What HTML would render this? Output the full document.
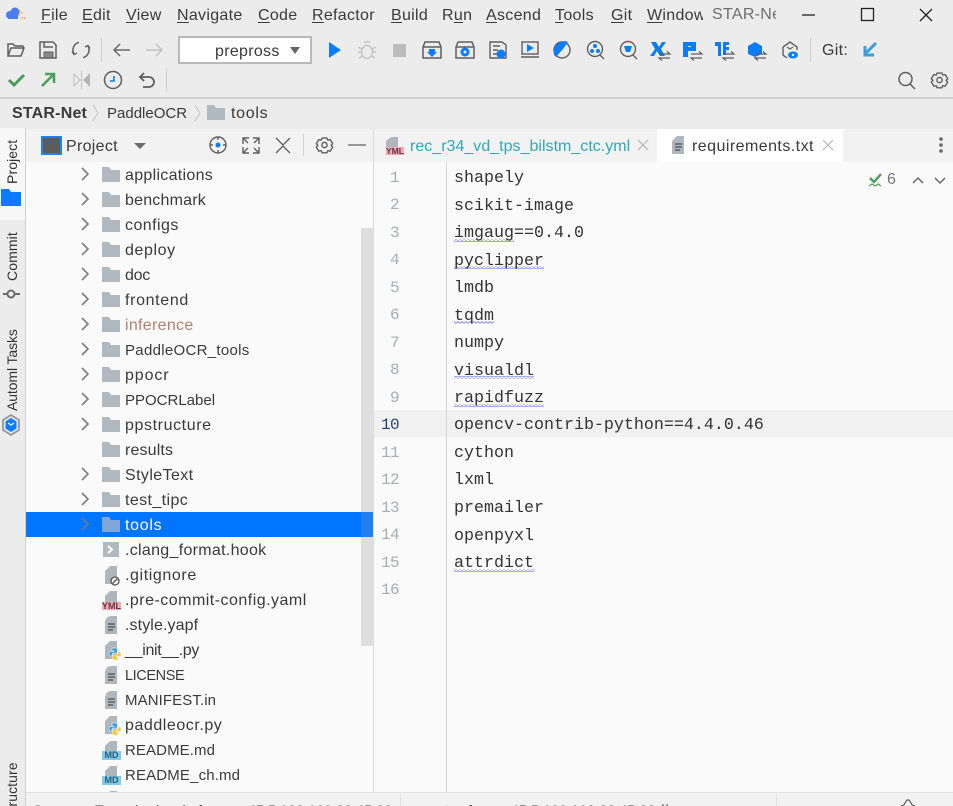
<!DOCTYPE html>
<html><head><meta charset="utf-8"><style>
*{box-sizing:border-box}
html{margin:0;padding:0;width:953px;height:806px;overflow:hidden}
body{margin:0;padding:0;width:953px;height:806px;overflow:hidden;background:#ececec;position:relative;font-family:"Liberation Sans",sans-serif;font-size:16px;letter-spacing:.3px;color:#3a3a3a}
#clip{position:absolute;left:0;top:0;width:953px;height:806px;overflow:hidden;contain:paint}
.a{position:absolute;white-space:pre;line-height:20px}
u{text-decoration-thickness:1px;text-underline-offset:2px}
.t{position:absolute;left:125px;white-space:pre;line-height:20px}
.m{position:absolute;left:454px;font-family:"Liberation Mono",monospace;font-size:16.67px;letter-spacing:0;line-height:20px;color:#333;white-space:pre}
.n{position:absolute;width:30px;left:369px;text-align:right;font-family:"Liberation Mono",monospace;font-size:16px;letter-spacing:-.6px;line-height:20px;color:#aaaeb1}
.v{position:absolute;transform-origin:0 0;transform:rotate(-90deg);white-space:pre;font-size:14px;letter-spacing:.1px;line-height:16px;color:#333}
.s{position:absolute;top:800px;font-size:14px;letter-spacing:.2px;line-height:20px;color:#333;white-space:pre}
svg{position:absolute;left:0;top:0}
</style></head><body><div id="clip">

<div class="a" style="left:0;top:97px;width:953px;height:2px;background:#d2d2d2"></div>
<div class="a" style="left:0;top:128px;width:26px;height:678px;background:#ececec;border-right:1px solid #d0d0d0"></div>
<div class="a" style="left:0;top:128px;width:25px;height:92px;background:#f7f7f7"></div>
<div class="a" style="left:26px;top:129px;width:347px;height:33px;background:#f2f2f2"></div>
<div class="a" style="left:26px;top:162px;width:347px;height:630px;background:#fafafa"></div>
<div class="a" style="left:361px;top:228px;width:12px;height:418px;background:#dedede"></div>
<div class="a" style="left:26px;top:512px;width:347px;height:25px;background:#0075ff"></div>
<div class="a" style="left:361px;top:512px;width:12px;height:25px;background:#1f80ee"></div>
<div class="a" style="left:373px;top:129px;width:1px;height:663px;background:#dcdcdc"></div>
<div class="a" style="left:374px;top:129px;width:579px;height:33px;background:#f2f2f2"></div>
<div class="a" style="left:657px;top:129px;width:186px;height:33px;background:#fff"></div>
<div class="a" style="left:374px;top:162px;width:579px;height:630px;background:#fafafa"></div>
<div class="a" style="left:374px;top:410px;width:579px;height:27px;background:#f1f1f1"></div>
<div class="a" style="left:446px;top:162px;width:1px;height:630px;background:#d6d6d6"></div>
<div class="a" style="left:26px;top:792px;width:927px;height:14px;background:#f2f2f2;border-top:1px solid #e4e4e4"></div>
<div class="a" style="left:178px;top:36px;width:134px;height:28px;background:#fff;border:2px solid #b9b9b9"></div>

<svg width="953" height="806" viewBox="0 0 953 806" fill="none">
<defs>
<pattern id="sq" width="4" height="3" patternUnits="userSpaceOnUse"><path d="M0 2.400 L2 .6 L4 2.400" stroke="#7f84ea" stroke-width=".9"/></pattern>
<g id="fo"><path d="M0 0h7l2 3h9v12H0z" fill="#b0b9c0"/></g>
<path id="ch" d="M-3-6l6 6-6 6" stroke="#7c7c7c" stroke-width="1.600"/>
<g id="doc"><path d="M5-9h7v18H0v-13z" fill="#aeb7bd"/><path d="M0-5.500l4-3.500v3.500z" fill="#aeb7bd"/><path d="M3-1h7M3 2h7M3 5h5" stroke="#4a4f52" stroke-width="1.200"/></g>
<g id="py"><path d="M5-9h7v18H0v-13z" fill="#aeb7bd"/>
<g transform="translate(4 -2)"><path d="M3 0h4a1.500 1.500 0 0 1 1.500 1.500V5H4.500A1.500 1.500 0 0 0 3 6.500V8H1.500A1.500 1.500 0 0 1 0 6.500V5a1.500 1.500 0 0 1 1.500-1.500H5V3H3z" fill="#3f9fd6" stroke="#fafafa" stroke-width=".5"/><path d="M9 12H5a1.500 1.500 0 0 1-1.500-1.500V7H7.500A1.500 1.500 0 0 0 9 5.500V4h1.500A1.500 1.500 0 0 1 12 5.500V7a1.500 1.500 0 0 1-1.500 1.500H7V9h2z" fill="#f6c83d" stroke="#fafafa" stroke-width=".5"/></g></g>
<g id="gear" stroke="#5f5f5f" stroke-width="1.700"><path d="M-3-8.500h6l1 2.500 3-.5 3 5-2 2 2 2-3 5-3-.5-1 2.500h-6l-1-2.500-3 .5-3-5 2-2-2-2 3-5 3 .5z" stroke-linejoin="round"/><circle r="3.200"/></g>
<g id="sw" stroke="#5e5e5e" stroke-width="1.200"><path d="M0 2h11l-3-2.500M11 6H0l3 2.500"/></g>
</defs>

<!-- logo -->
<circle cx="10" cy="15" r="4" fill="#4d7cf0"/><circle cx="15" cy="12" r="4.500" fill="#4d7cf0"/><rect x="8" y="13" width="10" height="6" fill="#4d7cf0"/>
<g fill="#f3a23c"><circle cx="20" cy="11" r=".9"/><circle cx="22" cy="13" r=".9"/><circle cx="19" cy="15" r=".9"/><circle cx="22" cy="18" r=".9"/><circle cx="25" cy="18" r=".9"/></g>
<!-- window -->
<path d="M802 15h13" stroke="#222" stroke-width="1.300"/>
<rect x="861.500" y="8.500" width="12" height="12" stroke="#222" stroke-width="1.300"/>
<path d="M920 9l12 12M932 9l-12 12" stroke="#222" stroke-width="1.300"/>

<!-- row 2 left -->
<path d="M8 56V44h5l2 2h8v3M8 56l3-8h13l-3 8z" stroke="#5f5f5f" stroke-width="1.500"/>
<path d="M40 42h13l3 3v13H40zM44 42v5h9" stroke="#5f5f5f" stroke-width="1.500"/><path d="M44 52h9v6h-9z" fill="#8a8a8a" stroke="#5f5f5f"/>
<path d="M79 42.300A8 8 0 0 0 74 54M83 57.700A8 8 0 0 0 88 46" stroke="#5f5f5f" stroke-width="1.500"/><path d="M72 51.500l2 3 3-1.500M90 48.500l-2-3-3 1.500" stroke="#5f5f5f" stroke-width="1.300"/>
<path d="M101.500 38v24" stroke="#d0d0d0" stroke-width="1"/>
<path d="M130 50h-16M120 44l-6 6 6 6" stroke="#6a6a6a" stroke-width="1.500"/>
<path d="M146 50h16M156 44l6 6-6 6" stroke="#c2c2c2" stroke-width="1.500"/>
<path d="M290 47h10l-5 7z" fill="#666"/>
<path d="M329 42l12 8-12 8z" fill="#0a7cff"/>
<g stroke="#c3c3c3" stroke-width="1.400"><ellipse cx="367" cy="52" rx="5.500" ry="6.500"/><path d="M364 42l6 0M358 47l4 2M376 47l-4 2M358 52h4M376 52h-4M359 58l3-2M375 58l-3-2"/></g>
<rect x="393" y="44" width="13" height="13" fill="#bcbcbc"/>
<g stroke="#5f5f5f" stroke-width="1.500"><path d="M423 47l2-5h14l2 5v11h-18zM423 47h18"/><path d="M456 47l2-5h14l2 5v11h-18zM456 47h18"/></g>
<path d="M429 49h6v3h2l-5 5-5-5h2z" fill="#0a7cff"/><circle cx="465" cy="52" r="4.500" fill="#0a7cff"/><circle cx="465" cy="52" r="1.500" fill="#ececec"/>
<g stroke="#5f5f5f" stroke-width="1.400"><path d="M491 42h11l4 3v13h-16V42z"/><path d="M493 46h7M493 50h5M493 54h4"/></g><circle cx="501" cy="54" r="4.500" fill="#0a7cff"/>
<g stroke="#5f5f5f" stroke-width="1.400"><rect x="522" y="42" width="16" height="12"/><path d="M521 57h18"/></g><path d="M527 44l7 4-7 4z" fill="#0a7cff"/>
<circle cx="562" cy="50" r="8" stroke="#5f5f5f" stroke-width="1.400"/><path d="M554 55q-2-12 11-14l3 1-5 7-7 8z" fill="#0a7cff"/>
<g stroke="#5f5f5f" stroke-width="1.400"><circle cx="595" cy="49" r="7.500"/><path d="M600 55l4 4"/><circle cx="628" cy="49" r="7.500"/><path d="M633 55l4 4"/></g>
<g fill="#0a7cff"><circle cx="595" cy="46" r="2"/><circle cx="592" cy="51" r="2"/><circle cx="598" cy="51" r="2"/><path d="M624 46h8l-2 6h-4z"/></g>
<path d="M651 42h5l3 5 3-5h4l-5 7 4 7h-5l-3-5-3 5h-4l5-7z" fill="#0a7cff"/><use href="#sw" x="659" y="52"/>
<path d="M683 42h13v9h-8v6h-5zM688 46v1h3v-1z" fill="#0a7cff"/><use href="#sw" x="691" y="52"/>
<path d="M715 42h6v14h-3V46h-3zM723 42h6v3h-3v2h3v3h-3v5h-3z" fill="#0a7cff"/><use href="#sw" x="723" y="52"/>
<path d="M748 46l7-4 7 4v8l-7 3-7-3z" fill="#0a7cff"/><use href="#sw" x="755" y="52"/>
<path d="M783 47l7-5 7 5v3M783 47v8l4 3" stroke="#5f5f5f" stroke-width="1.400"/><path d="M787 47l3 2 3-2" stroke="#5f5f5f" stroke-width="1.200"/><ellipse cx="793" cy="55" rx="5" ry="3.500" fill="#0a7cff"/><circle cx="793" cy="55" r="1.200" fill="#fff"/>
<path d="M810.500 38v24" stroke="#d0d0d0"/>
<path d="M876 43l-10 10M865 46v9h9" stroke="#3d9ddb" stroke-width="3"/>

<!-- row 3 -->
<path d="M9 80l5 5 10-10" stroke="#4e9d5e" stroke-width="3"/>
<path d="M42 86l11-11M45 74h9v9" stroke="#4e9d5e" stroke-width="2.600"/>
<path d="M74 74v12l6-6z" stroke="#c4c4c4" stroke-width="1.200"/><path d="M90 73v14l-7-7z" fill="#b4b4b4"/><path d="M81.500 70v20" stroke="#c4c4c4"/>
<circle cx="113" cy="80" r="8.500" stroke="#5f5f5f" stroke-width="1.500"/><path d="M114 76v5h-4" stroke="#0a7cff" stroke-width="1.600"/>
<path d="M144 73l-4 4 4 4M140 77h9a5 5 0 0 1 0 10h-6" stroke="#5f5f5f" stroke-width="1.800"/>
<path d="M166.500 68v24" stroke="#d0d0d0"/>
<circle cx="905.500" cy="79" r="6.500" stroke="#5f5f5f" stroke-width="1.500"/><path d="M910 84l5 5" stroke="#5f5f5f" stroke-width="1.500"/>
<use href="#gear" transform="translate(939.500 80) scale(.82)"/>

<!-- breadcrumb -->
<path d="M93 105l5 8-5 8M195 105l5 8-5 8" stroke="#c5c5c5" stroke-width="1"/>
<use href="#fo" x="207" y="105"/>

<!-- left strip -->
<path d="M1 189h8l2 3h10v14H1z" fill="#0a7cff"/>
<g stroke="#6b6b6b" stroke-width="2"><circle cx="11" cy="294" r="3.500"/><path d="M3 294h4M15 294h5"/></g>
<path d="M11 415l8 5v10l-8 5-8-5v-10z" fill="#e6e6e6" stroke="#8d9aa3" stroke-width="1.800"/><path d="M11 418l5.500 3.500v7L11 432l-5.500-3.500v-7z" fill="#0a7cff"/><path d="M8 423l3 2 3-2" stroke="#fff" stroke-width="1.200"/>

<!-- panel header -->
<rect x="42" y="137" width="19" height="17" fill="#5c5c5c" stroke="#1b84f2" stroke-width="2"/>
<path d="M134 143h12l-6 6z" fill="#6d6d6d"/>
<circle cx="218" cy="145" r="8" stroke="#5f5f5f" stroke-width="1.400"/><circle cx="218" cy="145" r="2.500" fill="#0a7cff"/><path d="M218 137v3M218 150v3M210 145h3M223 145h3" stroke="#5f5f5f" stroke-width="1.400"/>
<path d="M249 138h-6v6M253 138h6v6M249 153h-6v-6M253 153h6v-6M243 138l5 5M259 138l-5 5M243 153l5-5M259 153l-5-5" stroke="#5f5f5f" stroke-width="1.400"/>
<path d="M276 138l7 7 7-7M276 153l7-7 7 7" stroke="#5f5f5f" stroke-width="1.300"/>
<path d="M303.500 134v22" stroke="#d4d4d4"/>
<use href="#gear" transform="translate(324.500 145) scale(.82)"/>
<path d="M348 145h18" stroke="#5f5f5f" stroke-width="1.300"/>

<!-- tree -->
<g>
<use href="#ch" x="85" y="174"/><use href="#fo" x="102" y="167"/>
<use href="#ch" x="85" y="199"/><use href="#fo" x="102" y="192"/>
<use href="#ch" x="85" y="224"/><use href="#fo" x="102" y="217"/>
<use href="#ch" x="85" y="249"/><use href="#fo" x="102" y="242"/>
<use href="#ch" x="85" y="274"/><use href="#fo" x="102" y="267"/>
<use href="#ch" x="85" y="299"/><use href="#fo" x="102" y="292"/>
<use href="#ch" x="85" y="324"/><use href="#fo" x="102" y="317"/>
<use href="#ch" x="85" y="349"/><use href="#fo" x="102" y="342"/>
<use href="#ch" x="85" y="374"/><use href="#fo" x="102" y="367"/>
<use href="#ch" x="85" y="399"/><use href="#fo" x="102" y="392"/>
<use href="#ch" x="85" y="424"/><use href="#fo" x="102" y="417"/>
<use href="#fo" x="102" y="442"/>
<use href="#ch" x="85" y="474"/><use href="#fo" x="102" y="467"/>
<use href="#ch" x="85" y="499"/><use href="#fo" x="102" y="492"/>
<use href="#ch" x="85" y="524" opacity=".9"/><path d="M102 517h7l2 3h9v12h-18z" fill="#7ea6d8"/>
</g>
<rect x="103" y="542" width="16" height="15" fill="#b0b9c0"/><path d="M108 546l4 3.500-4 3.500" stroke="#fff" stroke-width="2"/>
<path d="M110 566h7v18h-12v-13z" fill="#aeb7bd"/><circle cx="115" cy="581" r="4" fill="#fafafa" stroke="#555" stroke-width="1.300"/><path d="M112.500 583.500l5-5" stroke="#555" stroke-width="1.300"/>
<path d="M110 591h7v11h-12v-6z" fill="#aeb7bd"/>
<rect x="102" y="602" width="19" height="8" fill="#f5a8b6"/>
<use href="#doc" x="105" y="625"/>
<use href="#py" x="105" y="650"/>
<use href="#doc" x="105" y="675"/>
<use href="#doc" x="105" y="700"/>
<use href="#py" x="105" y="725"/>
<path d="M110 741h7v10h-12v-5z" fill="#aeb7bd"/><rect x="102" y="751" width="19" height="9" fill="#7fcbea"/>
<path d="M110 766h7v10h-12v-5z" fill="#aeb7bd"/><rect x="102" y="776" width="19" height="9" fill="#7fcbea"/>
<path d="M110 791h7v1h-7z" fill="#aeb7bd"/>

<!-- tabs -->
<path d="M391 137h7v10h-12v-6z" fill="#aeb7bd"/><rect x="386" y="147" width="18" height="8" fill="#f5a8b6"/>
<path d="M638 140l10 10M648 140l-10 10M823 140l10 10M833 140l-10 10" stroke="#b5b5b5" stroke-width="1.200"/>
<g transform="translate(672 145)"><path d="M5-9h7v18H0v-13z" fill="#aeb7bd"/><path d="M3-1h7M3 2h7M3 5h5" stroke="#4a4f52" stroke-width="1.200"/></g>
<g fill="#666"><circle cx="941" cy="139" r="1.800"/><circle cx="941" cy="145" r="1.800"/><circle cx="941" cy="151" r="1.800"/></g>

<!-- inspection -->
<path d="M870 178l4 4 7-8" stroke="#4e9d5e" stroke-width="2.400"/><path d="M869 186l3-2 3 2 3-2 3 2" stroke="#4e9d5e" stroke-width="1.200"/>
<path d="M913 183l5-5 5 5M935 178l5 5 5-5" stroke="#666" stroke-width="1.500"/>

<!-- squiggles -->
<rect x="454" y="239" width="60" height="3" fill="url(#sq)"/>
<rect x="454" y="266" width="90" height="3" fill="url(#sq)"/>
<rect x="454" y="321" width="40" height="3" fill="url(#sq)"/>
<rect x="454" y="376" width="80" height="3" fill="url(#sq)"/>
<rect x="454" y="404" width="90" height="3" fill="url(#sq)"/>
<rect x="454" y="569" width="80" height="3" fill="url(#sq)"/>

<!-- status -->
<path d="M400.500 793v13M776.500 793v13" stroke="#e2e2e2"/>
<path d="M901 806l3-1 1-2 2-3h2l2 3 1 2 3 1" stroke="#5f5f5f" stroke-width="1.200"/>
</svg>

<!-- menu -->
<span class="a" style="left:41px;top:6px"><u>F</u>ile</span>
<span class="a" style="left:82px;top:6px"><u>E</u>dit</span>
<span class="a" style="left:126px;top:6px"><u>V</u>iew</span>
<span class="a" style="left:177px;top:6px"><u>N</u>avigate</span>
<span class="a" style="left:258px;top:6px"><u>C</u>ode</span>
<span class="a" style="left:312px;top:6px"><u>R</u>efactor</span>
<span class="a" style="left:391px;top:6px"><u>B</u>uild</span>
<span class="a" style="left:442px;top:6px">R<u>u</u>n</span>
<span class="a" style="left:486px;top:6px"><u>A</u>scend</span>
<span class="a" style="left:555px;top:6px"><u>T</u>ools</span>
<span class="a" style="left:611px;top:6px"><u>G</u>it</span>
<span class="a" style="left:647px;top:6px;width:56px;overflow:hidden"><u>W</u>indow</span>
<span class="a" style="left:712px;top:5px;width:64px;overflow:hidden;color:#6e6e6e">STAR-Net</span>

<span class="a" style="left:215px;top:42px">prepross</span>
<span class="a" style="left:822px;top:41px">Git:</span>

<!-- breadcrumb -->
<b class="a" style="left:12px;top:104px;letter-spacing:.2px">STAR-Net</b>
<span class="a" style="left:107px;top:104px;font-size:15px;letter-spacing:0">PaddleOCR</span>
<span class="a" style="left:231px;top:104px;letter-spacing:.7px">tools</span>

<!-- strip -->
<span class="v" style="left:4px;top:184px">Project</span>
<span class="v" style="left:4px;top:281px">Commit</span>
<span class="v" style="left:4px;top:411px;letter-spacing:-.1px">Automl Tasks</span>
<span class="v" style="left:4px;top:820px">Structure</span>

<span class="a" style="left:66px;top:137px">Project</span>

<!-- tree text -->
<span class="t" style="top:166px">applications</span>
<span class="t" style="top:191px;letter-spacing:.2px">benchmark</span>
<span class="t" style="top:216px;letter-spacing:.45px">configs</span>
<span class="t" style="top:241px;letter-spacing:.6px">deploy</span>
<span class="t" style="top:266px;letter-spacing:-.3px">doc</span>
<span class="t" style="top:291px;letter-spacing:.65px">frontend</span>
<span class="t" style="top:316px;color:#b5806f">inference</span>
<span class="t" style="top:341px;font-size:15px;letter-spacing:.3px">PaddleOCR_tools</span>
<span class="t" style="top:366px;letter-spacing:.9px">ppocr</span>
<span class="t" style="top:391px;font-size:15px;letter-spacing:0">PPOCRLabel</span>
<span class="t" style="top:416px;letter-spacing:.6px">ppstructure</span>
<span class="t" style="top:441px;letter-spacing:.15px">results</span>
<span class="t" style="top:466px;letter-spacing:.4px">StyleText</span>
<span class="t" style="top:491px;letter-spacing:.4px">test_tipc</span>
<span class="t" style="top:516px;color:#fff;letter-spacing:.7px">tools</span>
<span class="t" style="top:541px">.clang_format.hook</span>
<span class="t" style="top:566px;letter-spacing:.6px">.gitignore</span>
<span class="t" style="top:591px;letter-spacing:.48px">.pre-commit-config.yaml</span>
<span class="t" style="top:616px;letter-spacing:.1px">.style.yapf</span>
<span class="t" style="top:641px;letter-spacing:-.3px">__init__.py</span>
<span class="t" style="top:666px;font-size:14.500px;letter-spacing:-.4px">LICENSE</span>
<span class="t" style="top:691px;font-size:15px;letter-spacing:.1px">MANIFEST.in</span>
<span class="t" style="top:716px;letter-spacing:.55px">paddleocr.py</span>
<span class="t" style="top:741px;font-size:15px;letter-spacing:.1px">README.md</span>
<span class="t" style="top:766px;font-size:15px;letter-spacing:.15px">README_ch.md</span>

<span class="a" style="left:102px;top:601px;width:19px;font-size:9px;font-weight:bold;letter-spacing:0;line-height:10px;text-align:center;color:#5b3a40">YML</span>
<span class="a" style="left:102px;top:751px;width:19px;font-size:9px;font-weight:bold;letter-spacing:0;line-height:9px;text-align:center;color:#2f5a70">MD</span>
<span class="a" style="left:102px;top:776px;width:19px;font-size:9px;font-weight:bold;letter-spacing:0;line-height:9px;text-align:center;color:#2f5a70">MD</span>
<span class="a" style="left:386px;top:146px;width:18px;font-size:8.500px;font-weight:bold;letter-spacing:0;line-height:10px;text-align:center;color:#5b3a40">YML</span>

<!-- tabs -->
<span class="a" style="left:410px;top:137px;color:#2ea9b9;letter-spacing:.02px">rec_r34_vd_tps_bilstm_ctc.yml</span>
<span class="a" style="left:692px;top:137px;letter-spacing:.45px">requirements.txt</span>
<span class="a" style="left:887px;top:170px;color:#777">6</span>

<!-- code -->
<span class="n" style="top:168px">1</span><span class="m" style="top:169px">shapely</span>
<span class="n" style="top:195px">2</span><span class="m" style="top:197px">scikit-image</span>
<span class="n" style="top:223px">3</span><span class="m" style="top:224px">imgaug==0.4.0</span>
<span class="n" style="top:250px">4</span><span class="m" style="top:252px">pyclipper</span>
<span class="n" style="top:278px">5</span><span class="m" style="top:279px">lmdb</span>
<span class="n" style="top:305px">6</span><span class="m" style="top:307px">tqdm</span>
<span class="n" style="top:333px">7</span><span class="m" style="top:334px">numpy</span>
<span class="n" style="top:360px">8</span><span class="m" style="top:362px">visualdl</span>
<span class="n" style="top:388px">9</span><span class="m" style="top:389px">rapidfuzz</span>
<span class="n" style="top:415px;color:#1c3f78">10</span><span class="m" style="top:416px">opencv-contrib-python==4.4.0.46</span>
<span class="n" style="top:443px">11</span><span class="m" style="top:444px">cython</span>
<span class="n" style="top:470px">12</span><span class="m" style="top:471px">lxml</span>
<span class="n" style="top:498px">13</span><span class="m" style="top:499px">premailer</span>
<span class="n" style="top:525px">14</span><span class="m" style="top:527px">openpyxl</span>
<span class="n" style="top:553px">15</span><span class="m" style="top:554px">attrdict</span>
<span class="n" style="top:580px">16</span>

<!-- status -->
<span class="s" style="left:33px">Source:</span>
<span class="s" style="left:95px">Tunnels</span>
<span class="s" style="left:156px">local:</span>
<span class="s" style="left:198px">from</span>
<span class="s" style="left:248px">45.5.100.160:33 45:22</span>
<span class="s" style="left:412px">remote</span>
<span class="s" style="left:468px">from</span>
<span class="s" style="left:511px">45.5.100.160:33 45:22 ⟨⟩</span>
</div></body></html>
